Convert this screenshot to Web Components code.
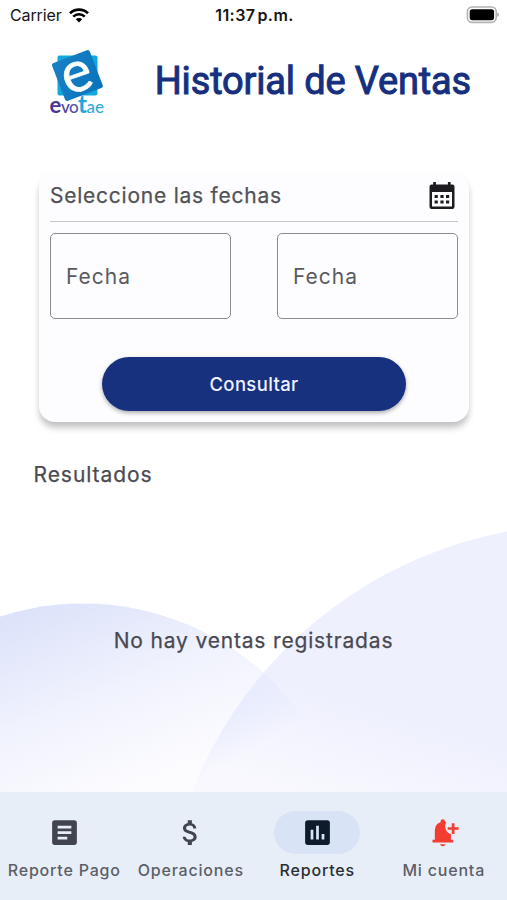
<!DOCTYPE html>
<html lang="es">
<head>
<meta charset="utf-8">
<title>Historial de Ventas</title>
<style>
html,body{margin:0;height:100%;background:#fff}
body{font-family:Inter,"Liberation Sans",sans-serif;color:#49494d;overflow:hidden}
</style>
</head>
<body>
<sales-app></sales-app>
<script>
const define = (name, html, setup) => {
  const t = document.createElement('template');
  t.innerHTML = html;
  customElements.define(name, class extends HTMLElement {
    constructor() {
      super();
      this.attachShadow({ mode: 'open' }).append(t.content.cloneNode(true));
    }
    connectedCallback() { if (setup) setup(this, this.shadowRoot); }
  });
};

define('status-bar', `
<style>
:host{display:grid;grid-template-columns:1fr auto 1fr;align-items:center;height:30px;padding:0 8px 0 10px;box-sizing:border-box;color:#151515;font-size:16px;line-height:20px}
.left{display:flex;align-items:center;gap:7px;letter-spacing:-.12px}
.time{font-weight:600;letter-spacing:.45px;word-spacing:-2.5px}
.right{justify-self:end;display:flex;margin-top:-1px}
svg{display:block}
</style>
<div class="left"><span>Carrier</span>
<svg width="20" height="15" viewBox="0 0 20 15" fill="none" stroke="#000"><path d="M1 5.2a13 13 0 0 1 18 0" stroke-width="2.6"/><path d="M4.2 8.6a8.4 8.4 0 0 1 11.6 0" stroke-width="2.5"/><path d="M10 14.6l-3.2-3.3a4.6 4.6 0 0 1 6.400 0z" fill="#000" stroke="none"/></svg></div>
<span class="time">11:37 p.m.</span>
<div class="right"><svg width="33" height="18" viewBox="0 0 33 18"><rect x="1.4" y="1" width="28.8" height="15.4" rx="4.6" fill="#fff" stroke="#b3b3b3" stroke-width="1.6"/><rect x="3.700" y="3.2" width="24.4" height="11" rx="2.6" fill="#000"/><path d="M31.400 6.6q1.400.6 1.400 2.2t-1.400 2.2z" fill="#999"/></svg></div>`);

define('brand-logo', `
<style>:host{display:block;width:60px;height:70px}svg{display:block;overflow:visible}</style>
<svg width="60" height="70" viewBox="0 0 60 70">
<defs><linearGradient id="g" x1="0" y1="0" x2="1" y2="1"><stop offset="0" stop-color="#1a80c4"/><stop offset="1" stop-color="#0873bd"/></linearGradient></defs>
<rect x="10.5" y="9.500" width="40" height="40" rx="2" fill="#12a8de"/>
<rect x="10.200" y="9.300" width="40.400" height="40.400" rx="2.4" transform="rotate(-21 30.4 29.500)" fill="url(#g)"/>
<text x="30" y="45" text-anchor="middle" transform="rotate(-19 31 30)" font-family="Lato,sans-serif" font-size="57" fill="#fff" stroke="#fff" stroke-width=".6">e</text>
<text y="66.500" font-family="Lato,sans-serif" font-size="17"><tspan x="2.6" font-weight="700" font-size="22" fill="#4c3594">e</tspan><tspan x="14" fill="#51439c" font-weight="500">v</tspan><tspan x="22" fill="#5356a7" font-weight="500">o</tspan><tspan x="31" font-weight="700" font-size="24" fill="#20a6de">t</tspan><tspan x="39.600" fill="#35a9dc" font-weight="500">a</tspan><tspan x="48" fill="#35a9dc" font-weight="500">e</tspan></text>
</svg>`);

define('app-header', `
<style>
:host{display:flex;align-items:center;height:78px;padding:0 36px 0 47px;margin-top:12px;justify-content:space-between}
h1{margin:0;font:400 38px/48px Roboto,sans-serif;color:#16307f;-webkit-text-stroke:1px #16307f;white-space:nowrap;letter-spacing:-.16px}
</style>
<brand-logo></brand-logo><h1><slot></slot></h1>`);

define('date-field', `
<style>
:host{display:flex;align-items:center;box-sizing:border-box;width:181px;height:86px;padding-left:15px;border:1.5px solid #8b8b90;border-radius:5px;font-size:21px;letter-spacing:1px;color:#5b5b5f}
</style><slot></slot>`);

define('pill-button', `
<style>
:host{display:block}
button{display:block;width:304px;height:54px;border:0;border-radius:27px;background:#18317f;color:#eef1ff;font:500 18.5px/54px Inter,sans-serif;letter-spacing:.35px;padding:0;box-shadow:0 2px 4px rgba(0,0,0,.32)}
</style><button><slot></slot></button>`);

define('date-card', `
<style>
:host{display:flex;flex-direction:column;box-sizing:border-box;width:430px;height:250px;margin:52px 0 0 39px;padding:0 11px;background:#fdfdff;border-radius:16px;box-shadow:0 7px 7px -1px rgba(0,0,0,.2),0 3px 6px rgba(0,0,0,.07)}
.head{display:flex;justify-content:space-between;align-items:center;height:49px;border-bottom:1px solid #c6c6ca;font-size:21px;letter-spacing:.76px;color:#525256;-webkit-text-stroke:.25px #525256}
.head span{margin-top:-3px}
.head svg{margin:-2px 3px 0 0}
.fields{display:flex;justify-content:space-between;margin-top:11px}
pill-button{align-self:center;margin-top:38px}
</style>
<div class="head"><span>Seleccione las fechas</span>
<svg width="26" height="29" viewBox="0 0 26 29"><path fill="#1d1b20" fill-rule="evenodd" d="M4.2 1h2.7v2.5h12V1h2.7v2.5h1.8A2.2 2.2 0 0 1 25.500 5.700v20.100A2.200 2.200 0 0 1 23.300 28H2.700A2.200 2.200 0 0 1 .5 25.800V5.700A2.200 2.200 0 0 1 2.700 3.500h1.500zM3 11v14.500h20V11z"/><g fill="#1d1b20"><rect x="5.600" y="14" width="3.200" height="3"/><rect x="11.400" y="14" width="3.200" height="3"/><rect x="17" y="14" width="3.200" height="3"/><rect x="5.600" y="19.500" width="3.200" height="3"/><rect x="11.400" y="19.500" width="3.200" height="3"/><rect x="17" y="19.500" width="3.200" height="3"/></g></svg></div>
<div class="fields"><date-field>Fecha</date-field><date-field>Fecha</date-field></div>
<pill-button>Consultar</pill-button>`);

define('results-section', `
<style>
:host{display:flex;flex-direction:column;flex:1;padding-top:38px;font-size:21px;line-height:30px;letter-spacing:.95px;color:#4b4b50;-webkit-text-stroke:.25px #4b4b50}
h2{margin:0 0 0 33.5px;font:inherit}
p{margin:136px 0 0;text-align:center;letter-spacing:.83px;color:#484854}
</style><h2>Resultados</h2><p><slot></slot></p>`);

define('wave-backdrop', `
<style>:host{position:absolute;inset:0;z-index:-1}svg{display:block}</style>
<svg width="507" height="900" viewBox="0 0 507 900">
<defs>
<linearGradient id="l" gradientUnits="userSpaceOnUse" x1="40" y1="610" x2="115" y2="795"><stop offset="0" stop-color="#dde3fa"/><stop offset=".5" stop-color="#f0f2fd"/><stop offset="1" stop-color="#fcfcff"/></linearGradient>
<linearGradient id="r" gradientUnits="userSpaceOnUse" x1="350" y1="700" x2="320" y2="800"><stop offset="0" stop-color="#eef0fd"/><stop offset="1" stop-color="#f8f8fe"/></linearGradient>
<linearGradient id="o" gradientUnits="userSpaceOnUse" x1="262" y1="690" x2="285" y2="730"><stop offset="0" stop-color="#e8ecfd"/><stop offset="1" stop-color="#e8ecfd" stop-opacity="0"/></linearGradient>
<clipPath id="c"><circle cx="83" cy="873.5" r="270"/></clipPath>
</defs>
<circle cx="83" cy="873.5" r="270" fill="url(#l)"/>
<circle cx="584.7" cy="946.1" r="421.8" fill="url(#r)"/>
<circle cx="584.7" cy="946.1" r="421.8" fill="url(#o)" clip-path="url(#c)"/>
</svg>`);

const ICONS = {
  article: '<path fill="#42454f" d="M19 3H5a2 2 0 0 0-2 2v14a2 2 0 0 0 2 2h14a2 2 0 0 0 2-2V5a2 2 0 0 0-2-2zm-5 14H7v-2h7zm3-4H7v-2h10zm0-4H7V7h10z"/>',
  money: '<path fill="#42454f" d="M11.800 10.900c-2.270-.59-3-1.200-3-2.150 0-1.090 1.010-1.850 2.700-1.850 1.780 0 2.440.85 2.500 2.100h2.210c-.07-1.720-1.120-3.300-3.210-3.810V3h-3v2.160c-1.940.42-3.500 1.680-3.500 3.610 0 2.310 1.910 3.460 4.700 4.130 2.500.6 3 1.480 3 2.410 0 .69-.49 1.790-2.700 1.790-2.060 0-2.870-.92-2.980-2.100h-2.200c.12 2.190 1.760 3.420 3.680 3.830V21h3v-2.150c1.950-.37 3.500-1.500 3.500-3.550 0-2.840-2.430-3.810-4.700-4.400z"/>',
  chart: '<path fill="#0d1b2b" d="M19 3H5a2 2 0 0 0-2 2v14a2 2 0 0 0 2 2h14a2 2 0 0 0 2-2V5a2 2 0 0 0-2-2zM9 17H7v-7h2zm4 0h-2V7h2zm4 0h-2v-4h2z"/>',
  bell: '<path fill="#f33d2f" d="M11.500 22q-.83 0-1.410-.59T9.500 20.500h4q0 .33-.59.910T11.500 22zM4 19.200v-2H5.700V10.300q0-2.070 1.150-3.690T9.900 4.500V3.800q0-.63.480-1.060T11.500 2.300t1.060.44T13.100 3.800v.4q.5.1.9.4-.8 1.200-.8 2.900 0 2.200 1.250 3.700T17.400 13v4.200h1.700v2z"/><path fill="#f33d2f" d="M18 13V10h-3V8.200h3v-3h2v3h3V10h-3v3z"/>'
};

define('nav-item', `
<style>
:host{display:flex;flex-direction:column;align-items:center;flex:1;min-width:0;padding-top:19px;font-size:16px;line-height:22px;font-weight:500;letter-spacing:.8px;color:#5c5f68;white-space:nowrap}
:host([active]){color:#2b2e34}
.icon{display:grid;place-items:center;width:86px;height:43px;border-radius:22px;margin-bottom:5px}
:host([active]) .icon{background:#d8e4f6}
svg{display:block;width:33px;height:33px;overflow:visible}
</style>
<div class="icon"><svg viewBox="0 0 24 24"></svg></div><span><slot></slot></span>`,
(el, root) => { root.querySelector('svg').innerHTML = ICONS[el.getAttribute('icon')]; });

define('bottom-nav', `
<style>:host{display:flex;height:108px;padding-left:1px;box-sizing:border-box;background:#e8eef7}</style><slot></slot>`);

define('sales-app', `
<style>:host{display:flex;flex-direction:column;position:relative;z-index:0;width:507px;height:900px;overflow:hidden}</style>
<wave-backdrop></wave-backdrop>
<status-bar></status-bar>
<app-header>Historial de Ventas</app-header>
<date-card></date-card>
<results-section>No hay ventas registradas</results-section>
<bottom-nav>
<nav-item icon="article">Reporte Pago</nav-item>
<nav-item icon="money">Operaciones</nav-item>
<nav-item icon="chart" active>Reportes</nav-item>
<nav-item icon="bell">Mi cuenta</nav-item>
</bottom-nav>`);
</script>
</body>
</html>
